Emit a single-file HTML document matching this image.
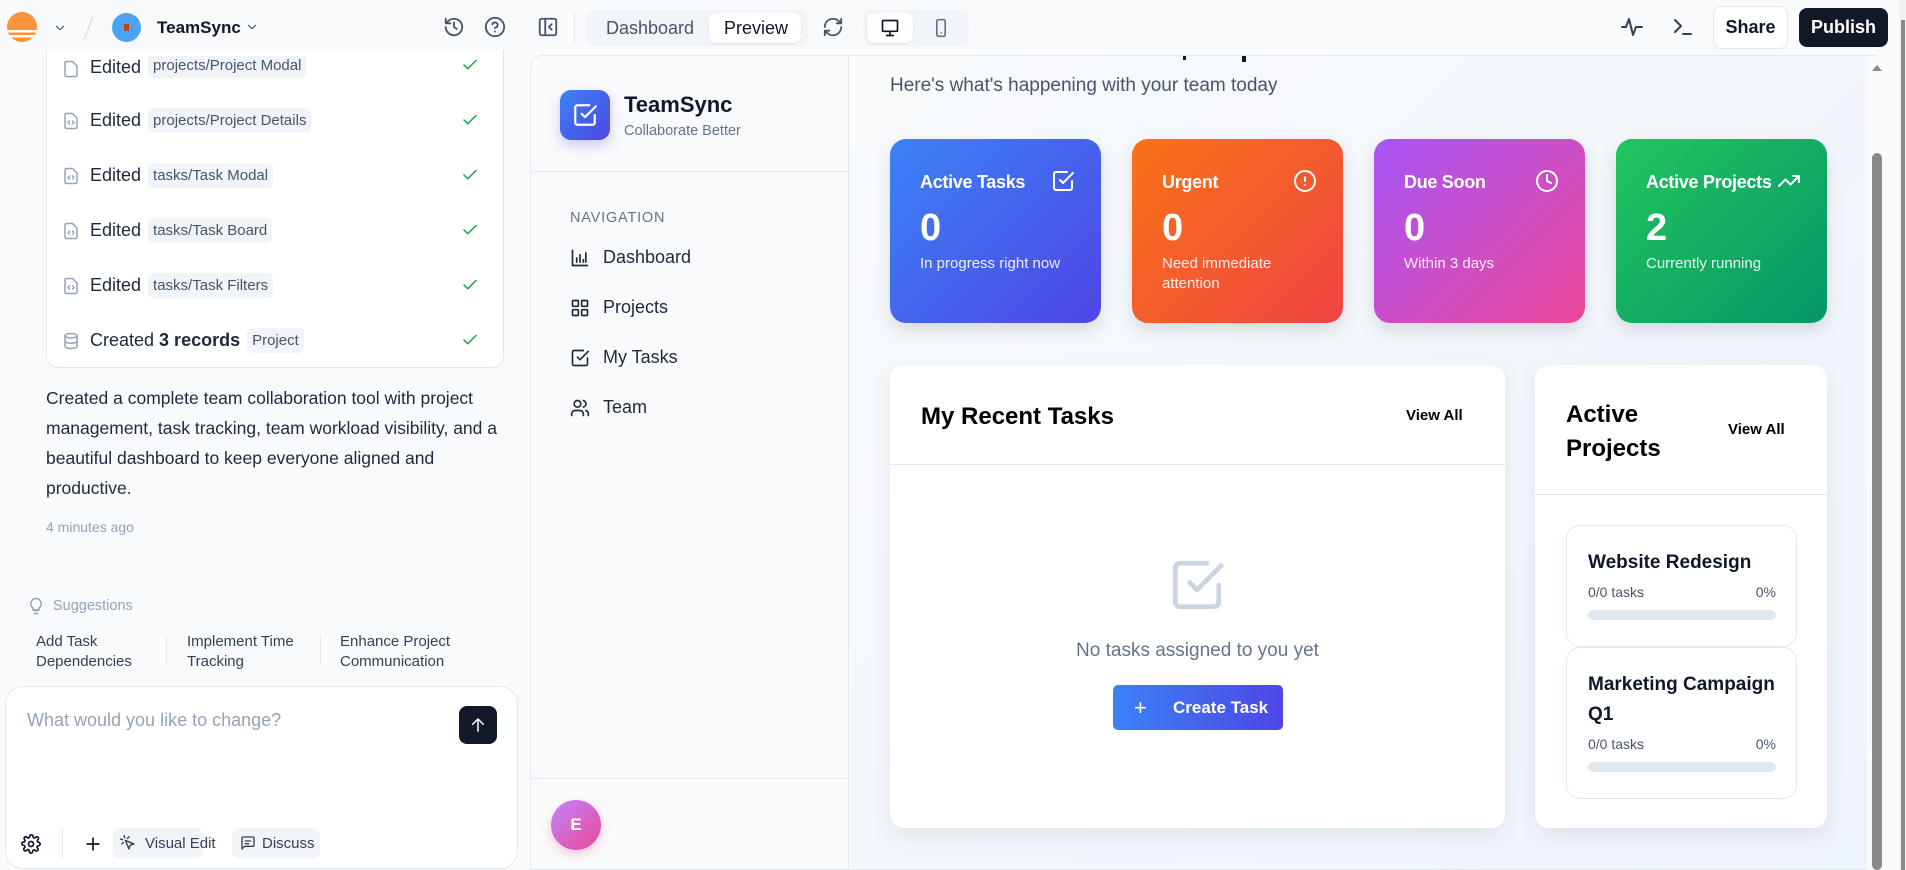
<!DOCTYPE html>
<html><head><meta charset="utf-8"><style>
*{box-sizing:border-box;margin:0;padding:0}
body{width:1906px;height:870px;overflow:hidden;background:#f8fafc;font-family:"Liberation Sans",sans-serif;color:#0f172a;position:relative}
.a{position:absolute}
svg{display:block}
.ic{fill:none;stroke:currentColor;stroke-width:2;stroke-linecap:round;stroke-linejoin:round}
.row{position:absolute;left:62px;display:flex;align-items:center;font-size:18px;color:#1e293b}
.tag{background:#f1f5f9;border-radius:5px;padding:4px 5px;font-size:15px;color:#475569;margin-left:7px}
.chk{position:absolute;left:461px;color:#16a34a}
.card{position:absolute;top:139px;width:211px;height:184px;border-radius:16px;color:#fff;box-shadow:0 8px 18px rgba(0,0,0,.12)}
.card .t{position:absolute;left:30px;top:33px;font-size:18px;font-weight:bold;letter-spacing:-.3px}
.card .n{position:absolute;left:30px;top:68px;font-size:38px;font-weight:bold}
.card .s{position:absolute;left:30px;top:115px;font-size:15px;line-height:20px;opacity:.9;width:160px}
.card .i{position:absolute;right:26px;top:30px}
.nav{position:absolute;left:570px;display:flex;align-items:center;font-size:18px;color:#1e293b}
.nav svg{margin-right:13px}
.pc{position:absolute;left:1566px;width:231px;border:1px solid #e2e8f0;border-radius:14px;background:#fff}
.pc .nm{font-size:19px;font-weight:bold;margin:22px 0 0 21px;line-height:30px}
.pc .m{display:flex;justify-content:space-between;margin:6px 20px 0 21px;font-size:14px;color:#475569}
.pc .bar{height:10px;background:#e2e8f0;border-radius:5px;margin:10px 20px 0 21px}
</style></head><body>

<!-- top bar -->
<div class="a" style="left:0;top:0;width:1906px;height:55px;background:#f8fafc"></div>
<svg class="a" style="left:6px;top:11px" width="32" height="32" viewBox="0 0 32 32"><defs><clipPath id="c"><circle cx="16" cy="16" r="15"/></clipPath></defs><g clip-path="url(#c)"><rect width="32" height="32" fill="#fb923c"/><rect y="19" width="32" height="2.5" fill="#fff"/><rect y="24" width="32" height="2.5" fill="#fff"/></g></svg>
<svg class="a ic" style="left:53px;top:21px;color:#475569" width="14" height="14" viewBox="0 0 24 24"><path d="M6 9l6 6 6-6"/></svg>
<div class="a" style="left:88px;top:16px;width:1px;height:24px;background:#cbd5e1;transform:rotate(20deg)"></div>
<div class="a" style="left:112px;top:13px;width:29px;height:29px;border-radius:50%;background:#4aa3f5"></div>
<div class="a" style="left:124px;top:24px;width:5px;height:7px;background:#c2410c"></div>
<div class="a" style="left:157px;top:18px;font-size:17px;font-weight:bold">TeamSync</div>
<svg class="a ic" style="left:245px;top:20px;color:#475569" width="14" height="14" viewBox="0 0 24 24"><path d="M6 9l6 6 6-6"/></svg>
<svg class="a ic" style="left:443px;top:16px;color:#475569" width="22" height="22" viewBox="0 0 24 24"><path d="M3 12a9 9 0 1 0 3-6.7L3 8M3 3v5h5M12 7v5l3 2"/></svg>
<svg class="a ic" style="left:484px;top:16px;color:#475569" width="22" height="22" viewBox="0 0 24 24"><circle cx="12" cy="12" r="10"/><path d="M9.1 9a3 3 0 0 1 5.8 1c0 2-3 3-3 3M12 17h.01"/></svg>
<svg class="a ic" style="left:537px;top:16px;color:#475569" width="22" height="22" viewBox="0 0 24 24"><rect x="3" y="3" width="18" height="18" rx="2"/><path d="M9 3v18M16 15l-3-3 3-3"/></svg>
<div class="a" style="left:574px;top:12px;width:1px;height:32px;background:#e2e8f0"></div>
<div class="a" style="left:586px;top:10px;width:222px;height:36px;background:#f1f5f9;border-radius:9px"></div>
<div class="a" style="left:606px;top:18px;font-size:18px;color:#475569">Dashboard</div>
<div class="a" style="left:709px;top:13px;width:92px;height:30px;background:#fff;border-radius:7px;box-shadow:0 1px 2px rgba(0,0,0,.08)"></div>
<div class="a" style="left:724px;top:18px;font-size:18px;color:#0f172a">Preview</div>
<svg class="a ic" style="left:822px;top:16px;color:#475569" width="22" height="22" viewBox="0 0 24 24"><path d="M21 12a9 9 0 0 1-15 6.7L3 16M3 12a9 9 0 0 1 15-6.7L21 8M21 3v5h-5M3 21v-5h5"/></svg>
<div class="a" style="left:863px;top:10px;width:106px;height:36px;background:#f1f5f9;border-radius:9px"></div>
<div class="a" style="left:867px;top:13px;width:46px;height:30px;background:#fff;border-radius:7px;box-shadow:0 1px 2px rgba(0,0,0,.08)"></div>
<svg class="a ic" style="left:880px;top:18px;color:#0f172a" width="20" height="20" viewBox="0 0 24 24"><rect x="3" y="3" width="18" height="13" rx="1"/><path d="M12 16v5M8 21h8"/></svg>
<svg class="a ic" style="left:931px;top:18px;color:#64748b" width="20" height="20" viewBox="0 0 24 24"><rect x="7" y="2" width="10" height="20" rx="2"/><path d="M12 18h.01"/></svg>
<svg class="a ic" style="left:1620px;top:15px;color:#334155" width="24" height="24" viewBox="0 0 24 24"><path d="M2 12h4l3-8 4 16 3-8h6"/></svg>
<svg class="a ic" style="left:1671px;top:15px;color:#334155" width="24" height="24" viewBox="0 0 24 24"><path d="M4 17l6-6-6-6M12 19h8"/></svg>
<div class="a" style="left:1713px;top:6px;width:75px;height:43px;background:#fff;border:1px solid #e2e8f0;border-radius:8px;font-size:18px;font-weight:bold;text-align:center;line-height:41px">Share</div>
<div class="a" style="left:1799px;top:8px;width:89px;height:39px;background:#111827;color:#fff;border-radius:8px;font-size:18px;font-weight:bold;text-align:center;line-height:39px">Publish</div>

<!-- left panel -->
<div class="a" style="left:46px;top:50px;width:458px;height:318px;background:#fff;border:1px solid #e2e8f0;border-top:none;border-radius:0 0 12px 12px"></div>
<div class="a" style="left:0;top:55px;width:520px;height:5px;background:#f8fafc"></div>
<div class="a" style="left:46px;top:55px;width:458px;height:10px;background:#fff;border-left:1px solid #e2e8f0;border-right:1px solid #e2e8f0"></div>

<div class="row" style="top:56px;height:22px;overflow:hidden;align-items:flex-end"><svg class="ic" style="color:#94a3b8" width="18" height="18" viewBox="0 0 24 24"><path d="M14 2H6a2 2 0 0 0-2 2v16a2 2 0 0 0 2 2h12a2 2 0 0 0 2-2V8z"/></svg><span style="margin-left:10px">Edited</span><span class="tag">projects/Project Modal</span></div>
<svg class="chk ic" style="top:56px" width="18" height="18" viewBox="0 0 24 24"><path d="M20 6L9 17l-5-5"/></svg>

<div class="row" style="top:108px"><svg class="ic" style="color:#94a3b8" width="18" height="20" viewBox="0 0 24 24"><path d="M14 2H6a2 2 0 0 0-2 2v16a2 2 0 0 0 2 2h12a2 2 0 0 0 2-2V8zM10 12l-2 2 2 2M14 12l2 2-2 2"/></svg><span style="margin-left:10px">Edited</span><span class="tag">projects/Project Details</span></div>
<svg class="chk ic" style="top:111px" width="18" height="18" viewBox="0 0 24 24"><path d="M20 6L9 17l-5-5"/></svg>
<div class="row" style="top:163px"><svg class="ic" style="color:#94a3b8" width="18" height="20" viewBox="0 0 24 24"><path d="M14 2H6a2 2 0 0 0-2 2v16a2 2 0 0 0 2 2h12a2 2 0 0 0 2-2V8zM10 12l-2 2 2 2M14 12l2 2-2 2"/></svg><span style="margin-left:10px">Edited</span><span class="tag">tasks/Task Modal</span></div>
<svg class="chk ic" style="top:166px" width="18" height="18" viewBox="0 0 24 24"><path d="M20 6L9 17l-5-5"/></svg>
<div class="row" style="top:218px"><svg class="ic" style="color:#94a3b8" width="18" height="20" viewBox="0 0 24 24"><path d="M14 2H6a2 2 0 0 0-2 2v16a2 2 0 0 0 2 2h12a2 2 0 0 0 2-2V8zM10 12l-2 2 2 2M14 12l2 2-2 2"/></svg><span style="margin-left:10px">Edited</span><span class="tag">tasks/Task Board</span></div>
<svg class="chk ic" style="top:221px" width="18" height="18" viewBox="0 0 24 24"><path d="M20 6L9 17l-5-5"/></svg>
<div class="row" style="top:273px"><svg class="ic" style="color:#94a3b8" width="18" height="20" viewBox="0 0 24 24"><path d="M14 2H6a2 2 0 0 0-2 2v16a2 2 0 0 0 2 2h12a2 2 0 0 0 2-2V8zM10 12l-2 2 2 2M14 12l2 2-2 2"/></svg><span style="margin-left:10px">Edited</span><span class="tag">tasks/Task Filters</span></div>
<svg class="chk ic" style="top:276px" width="18" height="18" viewBox="0 0 24 24"><path d="M20 6L9 17l-5-5"/></svg>
<div class="row" style="top:328px"><svg class="ic" style="color:#94a3b8" width="18" height="20" viewBox="0 0 24 24"><ellipse cx="12" cy="5" rx="8" ry="3"/><path d="M4 5v14c0 1.7 3.6 3 8 3s8-1.3 8-3V5M4 12c0 1.7 3.6 3 8 3s8-1.3 8-3"/></svg><span style="margin-left:10px">Created <b>3 records</b></span><span class="tag">Project</span></div>
<svg class="chk ic" style="top:331px" width="18" height="18" viewBox="0 0 24 24"><path d="M20 6L9 17l-5-5"/></svg>

<div class="a" style="left:46px;top:383px;width:460px;font-size:17.5px;line-height:30px;color:#1e293b">Created a complete team collaboration tool with project management, task tracking, team workload visibility, and a beautiful dashboard to keep everyone aligned and productive.</div>
<div class="a" style="left:46px;top:519px;font-size:14px;color:#94a3b8">4 minutes ago</div>

<svg class="a ic" style="left:27px;top:596px;color:#94a3b8" width="18" height="20" viewBox="0 0 24 24"><path d="M9 18h6M10 22h4M12 2a7 7 0 0 0-4 12.7V17h8v-2.3A7 7 0 0 0 12 2z"/></svg>
<div class="a" style="left:53px;top:598px;font-size:14.5px;color:#94a3b8">Suggestions</div>
<div class="a" style="left:36px;top:632px;font-size:15px;line-height:20px;color:#334155">Add Task<br>Dependencies</div>
<div class="a" style="left:166px;top:635px;width:1px;height:30px;background:#e2e8f0"></div>
<div class="a" style="left:187px;top:632px;font-size:15px;line-height:20px;color:#334155">Implement Time<br>Tracking</div>
<div class="a" style="left:320px;top:635px;width:1px;height:30px;background:#e2e8f0"></div>
<div class="a" style="left:340px;top:632px;font-size:15px;line-height:20px;color:#334155">Enhance Project<br>Communication</div>

<div class="a" style="left:5px;top:686px;width:513px;height:183px;background:#fff;border:1px solid #e2e8f0;border-radius:18px"></div>
<div class="a" style="left:27px;top:710px;font-size:18px;color:#94a3b8">What would you like to change?</div>
<div class="a" style="left:459px;top:706px;width:38px;height:38px;background:#111827;border-radius:8px"></div>
<svg class="a ic" style="left:469px;top:716px;color:#fff" width="18" height="18" viewBox="0 0 24 24"><path d="M12 20V4M5 11l7-7 7 7"/></svg>
<svg class="a ic" style="left:21px;top:834px;color:#0f172a" width="20" height="20" viewBox="0 0 24 24"><circle cx="12" cy="12" r="3"/><path d="M19.4 15a1.7 1.7 0 0 0 .3 1.8l.1.1a2 2 0 1 1-2.8 2.8l-.1-.1a1.7 1.7 0 0 0-2.9 1.2V21a2 2 0 1 1-4 0v-.1A1.7 1.7 0 0 0 7 19.4l-.1.1a2 2 0 1 1-2.800-2.8l.1-.1A1.7 1.7 0 0 0 3 13.6H3a2 2 0 1 1 0-4h.1A1.7 1.7 0 0 0 4.6 7l-.1-.1a2 2 0 1 1 2.8-2.8l.1.1A1.7 1.7 0 0 0 10.4 3V3a2 2 0 1 1 4 0v.1a1.7 1.7 0 0 0 2.9 1.2l.1-.1a2 2 0 1 1 2.8 2.8l-.1.1a1.7 1.7 0 0 0 1.2 2.9H21a2 2 0 1 1 0 4h-.1a1.7 1.7 0 0 0-1.5 1z"/></svg>
<div class="a" style="left:62px;top:828px;width:1px;height:30px;background:#e2e8f0"></div>
<svg class="a ic" style="left:83px;top:834px;color:#0f172a" width="20" height="20" viewBox="0 0 24 24"><path d="M12 5v14M5 12h14"/></svg>
<div class="a" style="left:113px;top:828px;width:90px;height:30px;background:#f1f5f9;border-radius:7px"></div>
<svg class="a ic" style="left:119px;top:834px;color:#334155" width="17" height="17" viewBox="0 0 24 24"><path d="M9 9l5 12 1.8-5.2L21 14zM7.2 2.2L8 5.1M5.1 8l-2.9-.8M14 4.1L12 6.2M6.2 12l-2.1 2"/></svg>
<div class="a" style="left:145px;top:835px;font-size:15px;color:#334155">Visual Edit</div>
<div class="a" style="left:232px;top:828px;width:88px;height:30px;background:#f1f5f9;border-radius:7px"></div>
<svg class="a ic" style="left:240px;top:835px;color:#334155" width="16" height="16" viewBox="0 0 24 24"><path d="M21 15a2 2 0 0 1-2 2H7l-4 4V5a2 2 0 0 1 2-2h14a2 2 0 0 1 2 2zM8 9h8M8 13h5"/></svg>
<div class="a" style="left:262px;top:835px;font-size:15px;color:#334155">Discuss</div>

<!-- preview frame -->
<div class="a" style="left:530px;top:55px;width:1355px;height:815px;border:1px solid #e2e8f0;border-radius:12px 12px 0 0;background:#f9fafb;overflow:hidden"></div>
<div class="a" style="left:531px;top:56px;width:318px;height:813px;background:#f9fafb;border-right:1px solid #e2e8f0;border-radius:11px 0 0 0"></div>
<div class="a" style="left:560px;top:90px;width:50px;height:50px;border-radius:11px;background:linear-gradient(135deg,#3b82f6,#4f46e5);box-shadow:0 6px 12px rgba(79,70,229,.25)"></div>
<svg class="a ic" style="left:572px;top:102px;color:#fff" width="26" height="26" viewBox="0 0 24 24"><path d="M9 11l3 3L22 4"/><path d="M21 12v7a2 2 0 0 1-2 2H5a2 2 0 0 1-2-2V5a2 2 0 0 1 2-2h11"/></svg>
<div class="a" style="left:624px;top:92px;font-size:22px;font-weight:bold">TeamSync</div>
<div class="a" style="left:624px;top:123px;font-size:14.5px;color:#64748b">Collaborate Better</div>
<div class="a" style="left:531px;top:171px;width:318px;height:1px;background:#e2e8f0"></div>
<div class="a" style="left:570px;top:210px;font-size:14.5px;color:#64748b;letter-spacing:.8px">NAVIGATION</div>
<div class="nav" style="top:247px"><svg class="ic" width="20" height="20" viewBox="0 0 24 24"><path d="M3 3v18h18M8 17v-5M12 17V8M16 17v-3M19 17V6"/></svg>Dashboard</div>
<div class="nav" style="top:297px"><svg class="ic" width="20" height="20" viewBox="0 0 24 24"><rect x="3" y="3" width="7" height="7" rx="1"/><rect x="14" y="3" width="7" height="7" rx="1"/><rect x="3" y="14" width="7" height="7" rx="1"/><rect x="14" y="14" width="7" height="7" rx="1"/></svg>Projects</div>
<div class="nav" style="top:347px"><svg class="ic" width="20" height="20" viewBox="0 0 24 24"><path d="M9 11l3 3L22 4"/><path d="M21 12v7a2 2 0 0 1-2 2H5a2 2 0 0 1-2-2V5a2 2 0 0 1 2-2h11"/></svg>My Tasks</div>
<div class="nav" style="top:397px"><svg class="ic" width="20" height="20" viewBox="0 0 24 24"><circle cx="9" cy="7" r="4"/><path d="M2 21v-2a4 4 0 0 1 4-4h6a4 4 0 0 1 4 4v2M16 3.1a4 4 0 0 1 0 7.8M22 21v-2a4 4 0 0 0-3-3.9"/></svg>Team</div>
<div class="a" style="left:531px;top:778px;width:318px;height:1px;background:#e2e8f0"></div>
<div class="a" style="left:551px;top:800px;width:50px;height:50px;border-radius:50%;background:linear-gradient(135deg,#c084fc,#ec4899);color:#fff;font-weight:bold;font-size:17px;text-align:center;line-height:50px;box-shadow:0 4px 10px rgba(236,72,153,.3)">E</div>

<!-- main -->
<div class="a" style="left:850px;top:56px;width:1017px;height:813px;background:linear-gradient(135deg,#f8fafc,#eef4fd)"></div>
<div class="a" style="left:1183px;top:56px;width:3px;height:4px;background:#0f172a"></div>
<div class="a" style="left:1242px;top:56px;width:4px;height:6px;background:#0f172a"></div>
<div class="a" style="left:890px;top:75px;font-size:19px;color:#475569">Here's what's happening with your team today</div>

<div class="card" style="left:890px;background:linear-gradient(135deg,#3b82f6,#4f46e5)"><div class="t">Active Tasks</div><svg class="i ic" width="24" height="24" viewBox="0 0 24 24"><path d="M9 11l3 3L22 4"/><path d="M21 12v7a2 2 0 0 1-2 2H5a2 2 0 0 1-2-2V5a2 2 0 0 1 2-2h11"/></svg><div class="n">0</div><div class="s">In progress right now</div></div>
<div class="card" style="left:1132px;background:linear-gradient(135deg,#f97316,#ef4444)"><div class="t">Urgent</div><svg class="i ic" width="24" height="24" viewBox="0 0 24 24"><circle cx="12" cy="12" r="10"/><path d="M12 8v4M12 16h.01"/></svg><div class="n">0</div><div class="s">Need immediate attention</div></div>
<div class="card" style="left:1374px;background:linear-gradient(135deg,#a855f7,#ec4899)"><div class="t">Due Soon</div><svg class="i ic" width="24" height="24" viewBox="0 0 24 24"><circle cx="12" cy="12" r="10"/><path d="M12 6v6l4 2"/></svg><div class="n">0</div><div class="s">Within 3 days</div></div>
<div class="card" style="left:1616px;background:linear-gradient(135deg,#22c55e,#059669)"><div class="t">Active Projects</div><svg class="i ic" width="24" height="24" viewBox="0 0 24 24"><path d="M22 7l-8.5 8.5-5-5L2 17M16 7h6v6"/></svg><div class="n">2</div><div class="s">Currently running</div></div>

<div class="a" style="left:890px;top:365px;width:615px;height:463px;background:#fff;border-radius:14px;box-shadow:0 8px 22px rgba(15,23,42,.08)"></div>
<div class="a" style="left:921px;top:403px;font-size:24px;font-weight:bold;color:#000">My Recent Tasks</div>
<div class="a" style="left:1406px;top:407px;font-size:15px;font-weight:bold;color:#000">View All</div>
<div class="a" style="left:890px;top:464px;width:615px;height:1px;background:#e2e8f0"></div>
<svg class="a ic" style="left:1168px;top:556px;color:#cbd5e1" width="58" height="58" viewBox="0 0 24 24"><path d="M9 11l3 3L22 4"/><path d="M21 12v7a2 2 0 0 1-2 2H5a2 2 0 0 1-2-2V5a2 2 0 0 1 2-2h11"/></svg>
<div class="a" style="left:890px;top:640px;width:615px;text-align:center;font-size:19px;color:#64748b">No tasks assigned to you yet</div>
<div class="a" style="left:1113px;top:685px;width:170px;height:45px;border-radius:5px;background:linear-gradient(90deg,#3b82f6,#4f46e5);color:#fff;font-size:17px;font-weight:bold;line-height:45px"><span style="position:absolute;left:21px;font-size:22px;font-weight:normal">+</span><span style="position:absolute;left:60px">Create Task</span></div>

<div class="a" style="left:1535px;top:365px;width:292px;height:463px;background:#fff;border-radius:14px;box-shadow:0 8px 22px rgba(15,23,42,.08)"></div>
<div class="a" style="left:1566px;top:398px;font-size:24px;font-weight:bold;line-height:34px;color:#000">Active<br>Projects</div>
<div class="a" style="left:1728px;top:421px;font-size:15px;font-weight:bold;color:#000">View All</div>
<div class="a" style="left:1535px;top:494px;width:292px;height:1px;background:#e2e8f0"></div>
<div class="pc" style="top:525px;height:122px"><div class="nm">Website Redesign</div><div class="m"><span>0/0 tasks</span><span>0%</span></div><div class="bar"></div></div>
<div class="pc" style="top:647px;height:152px"><div class="nm">Marketing Campaign<br>Q1</div><div class="m"><span>0/0 tasks</span><span>0%</span></div><div class="bar"></div></div>

<!-- scrollbars -->
<div class="a" style="left:1867px;top:56px;width:18px;height:814px;background:#fafafa"></div>
<div class="a" style="left:1872px;top:65px;width:0;height:0;border-left:5px solid transparent;border-right:5px solid transparent;border-bottom:6px solid #888"></div>
<div class="a" style="left:1872px;top:153px;width:10px;height:717px;background:#8a8a8a;border-radius:5px"></div>
<div class="a" style="left:1899px;top:0;width:7px;height:870px;background:#f1f1f1"></div>
<div class="a" style="left:1901px;top:20px;width:4px;height:850px;background:#8a8a8a"></div>
</body></html>
